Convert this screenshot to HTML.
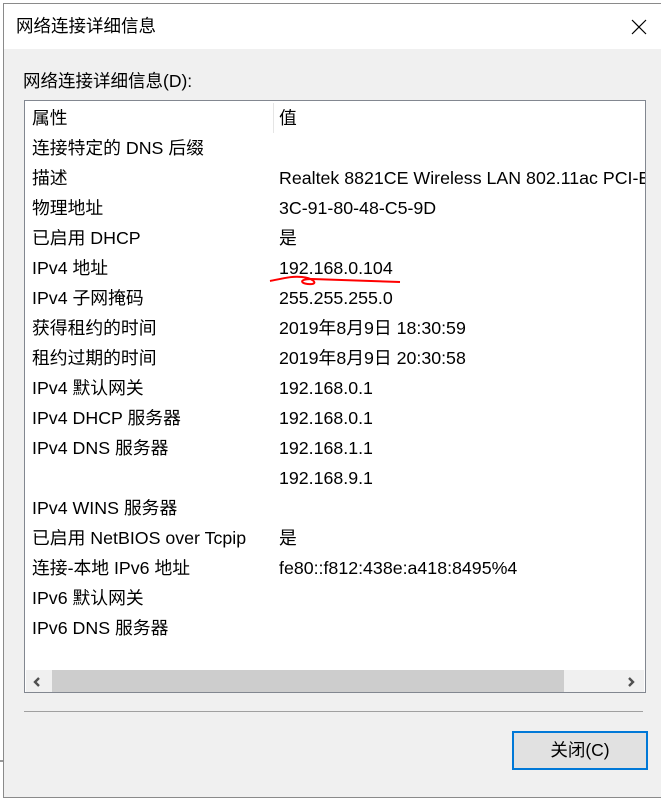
<!DOCTYPE html>
<html><head><meta charset="utf-8"><style>
body{margin:0;width:661px;height:807px;background:#fff;position:relative;overflow:hidden;font-family:"Liberation Sans","Noto Sans CJK SC",sans-serif;color:#000}
.win{position:absolute;left:3px;top:3px;width:680px;height:795px;background:#f0f0f0;border:1px solid #8a8a8a;box-sizing:border-box}
.title{position:absolute;left:0;top:0;right:0;height:45px;background:#fff}
.t{position:absolute;font-size:17.5px;white-space:nowrap;line-height:20px}
.box{position:absolute;left:20px;top:96px;width:622px;height:593px;background:#fff;border:1px solid #828790;box-sizing:border-box;overflow:hidden}
.r{position:absolute;font-size:17.8px;white-space:nowrap;line-height:20px}
</style></head><body>
<div style="position:absolute;left:0;top:760px;width:3px;height:2px;background:#999"></div>
<div class="win">
<div class="title"></div>
<div class="t" style="left:12px;top:12px">网络连接详细信息</div>
<svg style="position:absolute;left:627px;top:15px" width="16" height="16"><path d="M1 1L15 15M15 1L1 15" stroke="#000" stroke-width="1.2"/></svg>
<div class="t" style="left:19px;top:67px">网络连接详细信息(D):</div>
<div class="box">
<div style="position:absolute;left:248px;top:2px;width:1px;height:30px;background:#e5e5e5"></div>
<div class="r" style="left:7px;top:7px">属性</div><div class="r" style="left:254px;top:7px">值</div>
<div class="r" style="left:7px;top:37px">连接特定的 DNS 后缀</div>
<div class="r" style="left:7px;top:67px">描述</div><div class="r" style="left:254px;top:67px">Realtek 8821CE Wireless LAN 802.11ac PCI-E NIC</div>
<div class="r" style="left:7px;top:97px">物理地址</div><div class="r" style="left:254px;top:97px">3C-91-80-48-C5-9D</div>
<div class="r" style="left:7px;top:127px">已启用 DHCP</div><div class="r" style="left:254px;top:127px">是</div>
<div class="r" style="left:7px;top:157px">IPv4 地址</div><div class="r" style="left:254px;top:157px">192.168.0.104</div>
<div class="r" style="left:7px;top:187px">IPv4 子网掩码</div><div class="r" style="left:254px;top:187px">255.255.255.0</div>
<div class="r" style="left:7px;top:217px">获得租约的时间</div><div class="r" style="left:254px;top:217px">2019年8月9日 18:30:59</div>
<div class="r" style="left:7px;top:247px">租约过期的时间</div><div class="r" style="left:254px;top:247px">2019年8月9日 20:30:58</div>
<div class="r" style="left:7px;top:277px">IPv4 默认网关</div><div class="r" style="left:254px;top:277px">192.168.0.1</div>
<div class="r" style="left:7px;top:307px">IPv4 DHCP 服务器</div><div class="r" style="left:254px;top:307px">192.168.0.1</div>
<div class="r" style="left:7px;top:337px">IPv4 DNS 服务器</div><div class="r" style="left:254px;top:337px">192.168.1.1</div>
<div class="r" style="left:254px;top:367px">192.168.9.1</div>
<div class="r" style="left:7px;top:397px">IPv4 WINS 服务器</div>
<div class="r" style="left:7px;top:427px">已启用 NetBIOS over Tcpip</div><div class="r" style="left:254px;top:427px">是</div>
<div class="r" style="left:7px;top:457px">连接-本地 IPv6 地址</div><div class="r" style="left:254px;top:457px">fe80::f812:438e:a418:8495%4</div>
<div class="r" style="left:7px;top:487px">IPv6 默认网关</div>
<div class="r" style="left:7px;top:517px">IPv6 DNS 服务器</div>
<div style="position:absolute;left:1px;top:569px;width:618px;height:24px;background:#f0f0f0"></div>
<div style="position:absolute;left:27px;top:569px;width:512px;height:24px;background:#cdcdcd"></div>
<svg style="position:absolute;left:6px;top:575px" width="12" height="12"><path d="M8 2L4 6L8 10" stroke="#505050" stroke-width="2.4" fill="none"/></svg>
<svg style="position:absolute;left:600px;top:575px" width="12" height="12"><path d="M4 2L8 6L4 10" stroke="#505050" stroke-width="2.4" fill="none"/></svg>
</div>
<div style="position:absolute;left:20px;top:707px;width:619px;height:1px;background:#a0a0a0"></div>
<div style="position:absolute;left:508px;top:727px;width:136px;height:39px;border:2px solid #0078d7;background:#e1e1e1;box-sizing:border-box;font-size:17.5px;text-align:center;line-height:35px">关闭(C)</div>
</div>
<svg style="position:absolute;left:0;top:0" width="661" height="807"><path d="M270 281C285 278 292 276 302 277C312 278 318 283 312 284C302 285 296 279 312 279C340 280 370 281 400 282" stroke="#f00" stroke-width="2" fill="none"/></svg>
</body></html>
